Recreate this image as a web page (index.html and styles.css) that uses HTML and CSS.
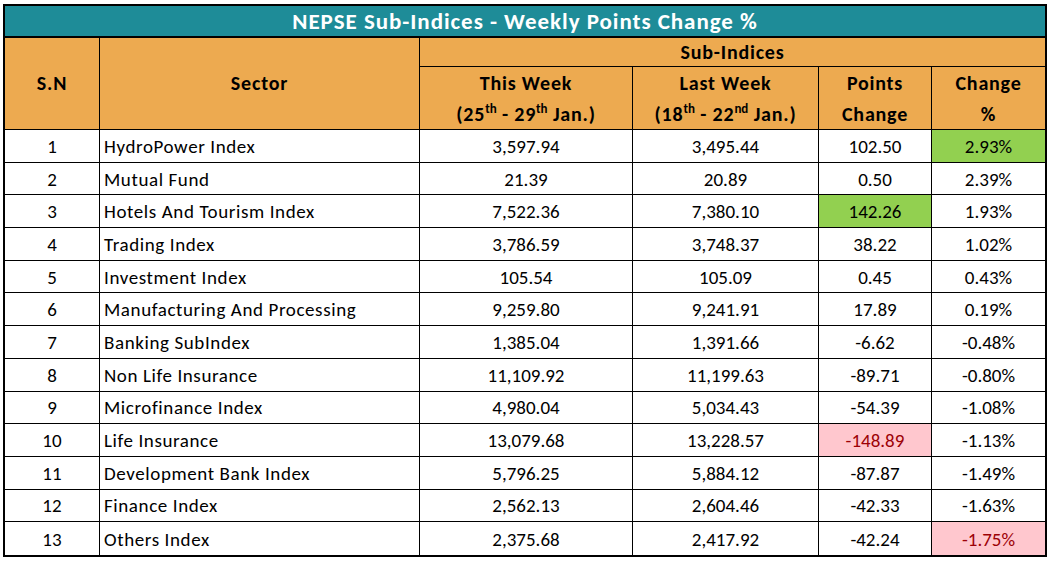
FILE: index.html
```html
<!DOCTYPE html>
<html>
<head>
<meta charset="utf-8">
<link rel="stylesheet" href="styles.css">
</head>
<body>
<div class="sheet">
  <div class="title">NEPSE Sub-Indices - Weekly Points Change %</div>
  <div class="hd sn">S.N</div>
  <div class="hd sector">Sector</div>
  <div class="hd group">Sub-Indices</div>
  <div class="hd two"><span>This Week<br>(25<sup>th</sup> - 29<sup>th</sup> Jan.)</span></div>
  <div class="hd two"><span>Last Week<br>(18<sup>th</sup> - 22<sup>nd</sup> Jan.)</span></div>
  <div class="hd two"><span>Points<br>Change</span></div>
  <div class="hd two last"><span>Change<br>%</span></div>

  <div class="c num">1</div><div class="c name">HydroPower Index</div><div class="c">3,597.94</div><div class="c">3,495.44</div><div class="c">102.50</div><div class="c last good">2.93%</div>
  <div class="c num">2</div><div class="c name">Mutual Fund</div><div class="c">21.39</div><div class="c">20.89</div><div class="c">0.50</div><div class="c last">2.39%</div>
  <div class="c num">3</div><div class="c name">Hotels And Tourism Index</div><div class="c">7,522.36</div><div class="c">7,380.10</div><div class="c good">142.26</div><div class="c last">1.93%</div>
  <div class="c num">4</div><div class="c name">Trading Index</div><div class="c">3,786.59</div><div class="c">3,748.37</div><div class="c">38.22</div><div class="c last">1.02%</div>
  <div class="c num">5</div><div class="c name">Investment Index</div><div class="c">105.54</div><div class="c">105.09</div><div class="c">0.45</div><div class="c last">0.43%</div>
  <div class="c num">6</div><div class="c name">Manufacturing And Processing</div><div class="c">9,259.80</div><div class="c">9,241.91</div><div class="c">17.89</div><div class="c last">0.19%</div>
  <div class="c num">7</div><div class="c name">Banking SubIndex</div><div class="c">1,385.04</div><div class="c">1,391.66</div><div class="c">-6.62</div><div class="c last">-0.48%</div>
  <div class="c num">8</div><div class="c name">Non Life Insurance</div><div class="c">11,109.92</div><div class="c">11,199.63</div><div class="c">-89.71</div><div class="c last">-0.80%</div>
  <div class="c num">9</div><div class="c name">Microfinance Index</div><div class="c">4,980.04</div><div class="c">5,034.43</div><div class="c">-54.39</div><div class="c last">-1.08%</div>
  <div class="c num">10</div><div class="c name">Life Insurance</div><div class="c">13,079.68</div><div class="c">13,228.57</div><div class="c bad">-148.89</div><div class="c last">-1.13%</div>
  <div class="c num">11</div><div class="c name">Development Bank Index</div><div class="c">5,796.25</div><div class="c">5,884.12</div><div class="c">-87.87</div><div class="c last">-1.49%</div>
  <div class="c num">12</div><div class="c name">Finance Index</div><div class="c">2,562.13</div><div class="c">2,604.46</div><div class="c">-42.33</div><div class="c last">-1.63%</div>
  <div class="c num bottom">13</div><div class="c name bottom">Others Index</div><div class="c bottom">2,375.68</div><div class="c bottom">2,417.92</div><div class="c bottom">-42.24</div><div class="c last bottom bad">-1.75%</div>
</div>
</body>
</html>
```
FILE: styles.css
```css
html, body {
  margin: 0;
  padding: 0;
  background: #ffffff;
}
body {
  padding: 4px 0 0 3px;
  font-family: Carlito, "Open Sans", "Liberation Sans", sans-serif;
  color: #000;
}
.sheet {
  width: 1044px;
  box-sizing: border-box;
  border: 2px solid #000;
  display: grid;
  grid-template-columns: 95px 320px 213px 186px 113px 113px;
  grid-template-rows: 32px 29px 63px repeat(13, 32.7px);
}
.title {
  grid-column: 1 / 7;
  background: #1e8c98;
  color: #fff;
  font-weight: bold;
  font-size: 23px;
  letter-spacing: 0.95px;
  display: flex;
  align-items: center;
  justify-content: center;
  border-bottom: 2px solid #000;
}
.hd {
  background: #edaa50;
  font-weight: bold;
  font-size: 20px;
  letter-spacing: 0.8px;
  display: flex;
  align-items: center;
  justify-content: center;
  text-align: center;
  border-right: 1px solid #000;
  border-bottom: 1px solid #000;
  line-height: 31px;
}
.hd.two {
  padding-top: 1px;
}
.sn { grid-column: 1; grid-row: 2 / 4; }
.sector { grid-column: 2; grid-row: 2 / 4; }
.group { grid-column: 3 / 7; grid-row: 2; border-right: none; }
.hd sup {
  font-size: 13px;
  letter-spacing: 0;
  line-height: 0;
  vertical-align: 8px;
}
.c {
  font-size: 19px;
  display: flex;
  align-items: center;
  justify-content: center;
  border-right: 1px solid #000;
  border-bottom: 1px solid #000;
  padding-top: 1px;
}
.c.name {
  justify-content: flex-start;
  padding-left: 4px;
  letter-spacing: 0.6px;
}
.last { border-right: none; }
.bottom { border-bottom: none; }
.good { background: #92d050; }
.bad { background: #ffc7ce; color: #9c0006; }
```
